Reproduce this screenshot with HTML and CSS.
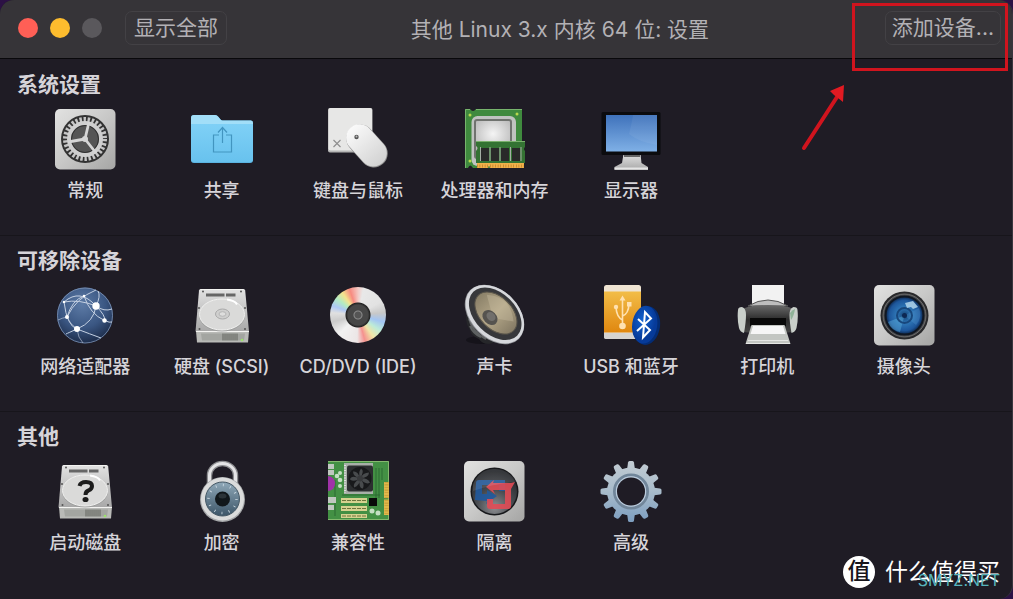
FILE: index.html
```html
<!DOCTYPE html>
<html lang="zh-CN">

<head>
    <meta charset="UTF-8">
    <meta name="viewport" content="width=device-width, initial-scale=1.0">
    <title>其他 Linux 3.x 内核 64 位: 设置</title>
    <link rel="stylesheet" href="styles.css">
</head>

<body>
    <!-- shared gradients and symbols -->
    <svg class="defs" width="0" height="0" aria-hidden="true">
        <defs>
            <linearGradient id="silver" x1="0" y1="0" x2="1" y2="1">
                <stop offset="0" stop-color="#e2e2e1" />
                <stop offset="0.5" stop-color="#c8c8c7" />
                <stop offset="1" stop-color="#a5a5a4" />
            </linearGradient>
            <linearGradient id="white" x1="0" y1="0" x2="0" y2="1">
                <stop offset="0" stop-color="#fafafa" />
                <stop offset="1" stop-color="#d2d2d2" />
            </linearGradient>
            <linearGradient id="metal" x1="0" y1="0" x2="0" y2="1">
                <stop offset="0" stop-color="#e2e2e2" />
                <stop offset="1" stop-color="#a8a8a8" />
            </linearGradient>
            <linearGradient id="folder" x1="0" y1="0" x2="0" y2="1">
                <stop offset="0" stop-color="#7fd0f6" />
                <stop offset="1" stop-color="#68c2ee" />
            </linearGradient>
            <linearGradient id="screen" x1="0" y1="0" x2="0" y2="1">
                <stop offset="0" stop-color="#3f72bb" />
                <stop offset="1" stop-color="#7fb0e6" />
            </linearGradient>
            <linearGradient id="orange" x1="0" y1="0" x2="0" y2="1">
                <stop offset="0" stop-color="#f2bd48" />
                <stop offset="1" stop-color="#e0870f" />
            </linearGradient>
            <linearGradient id="steel" x1="0" y1="0" x2="0" y2="1">
                <stop offset="0" stop-color="#c3ccd3" />
                <stop offset="0.5" stop-color="#a9bccb" />
                <stop offset="1" stop-color="#7c9dbf" />
            </linearGradient>
            <linearGradient id="dial" x1="0" y1="0" x2="0" y2="1">
                <stop offset="0" stop-color="#8fa8b8" />
                <stop offset="1" stop-color="#3c5568" />
            </linearGradient>
            <linearGradient id="cone" x1="0" y1="0" x2="1" y2="0">
                <stop offset="0" stop-color="#8a8068" />
                <stop offset="0.5" stop-color="#b3a688" />
                <stop offset="1" stop-color="#857b65" />
            </linearGradient>
            <linearGradient id="black" x1="0" y1="0" x2="0" y2="1">
                <stop offset="0" stop-color="#6a6a6a" />
                <stop offset="0.5" stop-color="#2c2c2c" />
                <stop offset="1" stop-color="#484848" />
            </linearGradient>
            <radialGradient id="globe" cx="0.45" cy="0.3" r="0.7">
                <stop offset="0" stop-color="#5d7ba6" />
                <stop offset="0.6" stop-color="#3a5682" />
                <stop offset="1" stop-color="#1d2d4b" />
            </radialGradient>
            <radialGradient id="lens">
                <stop offset="0" stop-color="#123e70" />
                <stop offset="0.4" stop-color="#2f78b8" />
                <stop offset="0.8" stop-color="#1d569b" />
                <stop offset="1" stop-color="#0c2447" />
            </radialGradient>
            <radialGradient id="bluetooth" cx="0.4" cy="0.4">
                <stop offset="0" stop-color="#1262d0" />
                <stop offset="1" stop-color="#063a99" />
            </radialGradient>
            <radialGradient id="die" cy="0.4" r="0.7">
                <stop offset="0" stop-color="#f4f4f4" />
                <stop offset="1" stop-color="#b5b5b5" />
            </radialGradient>
            <radialGradient id="glass" cy="0.85" r="0.8">
                <stop offset="0" stop-color="#8d8f92" />
                <stop offset="0.5" stop-color="#484b50" />
                <stop offset="1" stop-color="#202226" />
            </radialGradient>
            <symbol id="drive" viewBox="0 0 62 62">
                <path d="M5 47h53l-1 11.500H6z" fill="#b9bab7" />
                <path d="M10 49.500h44l-1 7H11z" fill="#a3a5a1" />
                <path d="M32 49.500v7M34 49.500v7M36 49.500v7M38 49.500v7M40 49.500v7M42 49.500v7M44 49.500v7M46 49.500v7" stroke="#62645f" />
                <circle cx="51" cy="56" r="1.300" fill="#9be36b" />
                <path d="M9.500 5h43q1.500 0 1.700 1.500L58 47.500H4.500L8 6.500Q8.200 5 9.500 5z" fill="url(#metal)" />
                <path d="M9.500 5.500h43M5 47.500h53" stroke="#f3f3f1" />
                <path d="M15 11h18.500M35 11h9.500" stroke="#666" stroke-width="3" />
                <ellipse cx="31" cy="31.500" rx="23" ry="16" fill="#9e9f9e" />
                <ellipse cx="31" cy="30.500" rx="22.500" ry="15.500" fill="#dadad9" stroke="#f1f1f0" />
                <path d="M36 15.500q8 1 10 5" stroke="#fff" stroke-width="2" fill="none" />
                <g fill="#555">
                    <circle cx="12" cy="7.500" r="1" />
                    <circle cx="50" cy="7.500" r="1" />
                    <circle cx="8" cy="24" r="1" />
                    <circle cx="54" cy="24" r="1" />
                    <circle cx="8.500" cy="45" r="1" />
                    <circle cx="54" cy="45" r="1" />
                </g>
            </symbol>
        </defs>
    </svg>

    <div class="window">
        <header class="titlebar">
            <div class="lights">
                <button class="light close" aria-label="关闭"></button>
                <button class="light minimize" aria-label="最小化"></button>
                <button class="light zoom" aria-label="缩放" disabled></button>
            </div>
            <button class="bar-button">显示全部</button>
            <h1>其他 Linux 3.x 内核 64 位: 设置</h1>
            <button class="bar-button add">添加设备...</button>
        </header>

        <main>
            <section>
                <h2>系统设置</h2>
                <div class="items">
                    <button class="item">
                        <svg class="icon" viewBox="0 0 62 62">
                            <rect x="1" y="1" width="60.500" height="60.500" rx="5" fill="url(#silver)" />
                            <circle cx="31" cy="31" r="24" fill="#323232" />
                            <circle cx="31" cy="31" r="19.500" fill="none" stroke="#c5c5c5" stroke-width="5" stroke-dasharray="2.400 1.684" />
                            <circle cx="31" cy="31" r="16" fill="#555" stroke="#cfcfcf" stroke-width="4" />
                            <circle cx="31" cy="31" r="13.500" fill="none" stroke="#303030" stroke-width="1" />
                            <path d="M31 31L35 14M31 31L14 34M31 31L42 45" stroke="#d5d5d5" stroke-width="2.800" />
                            <circle cx="31" cy="31" r="3" fill="#d5d5d5" />
                        </svg>
                        <span>常规</span>
                    </button>
                    <button class="item">
                        <svg class="icon" viewBox="0 0 62 62">
                            <path d="M0 10q0-3 3-3h21q2 0 3.500 2l2 2.500q.8 1 2 1H60q2 0 2 2.500v37q0 3-3 3H3q-3 0-3-3z" fill="#5bb4e2" />
                            <path d="M0 10q0-3 3-3h21q2 0 3.500 2l2 2.500q.8 1 2 1H60q2 0 2 2.500v3H0z" fill="#a2def8" />
                            <path d="M0 16h62v35q0 3-3 3H3q-3 0-3-3z" fill="url(#folder)" />
                            <path d="M28 27h-5.500v17h18V27H35M31.500 35V20M27 24.500l4.500-5 4.500 5" fill="none" stroke="#4295c0" stroke-width="1.200" />
                        </svg>
                        <span>共享</span>
                    </button>
                    <button class="item">
                        <svg class="icon" viewBox="0 0 62 62">
                            <rect x="1" y="0" width="44.500" height="44.500" rx="2" fill="#b5b5b5" />
                            <rect x="1.500" y="0" width="43.500" height="42.500" rx="2" fill="#e7e7e6" />
                            <path d="M6.500 32l7 7M13.500 32l-7 7" stroke="#8d8d8d" stroke-width="1.100" />
                            <rect x="26" y="14" width="28" height="48" rx="14" transform="rotate(-42 40 38)" fill="#8f8f8f" />
                            <rect x="26.500" y="13.500" width="27" height="47.500" rx="13.500" transform="rotate(-42 40 38)" fill="url(#white)" />
                            <circle cx="29.500" cy="29" r="2.200" fill="#555" />
                            <circle cx="29.500" cy="28.500" r="1" fill="#bbb" />
                        </svg>
                        <span>键盘与鼠标</span>
                    </button>
                    <button class="item">
                        <svg class="icon" viewBox="0 0 62 62">
                            <path d="M2 1h5q3 4 6 0h46v59H10q-3-5-5 0H2z" fill="#3f8a3e" />
                            <path d="M2.500 60V1.500H7M13 1.500h46" stroke="#77b46d" fill="none" />
                            <rect x="8.500" y="8" width="44.500" height="50" rx="6" fill="#c0c3c0" />
                            <rect x="11" y="11" width="38" height="40" rx="3" fill="#70736f" />
                            <rect x="13" y="13" width="34" height="32" rx="1" fill="url(#die)" />
                            <g fill="#b8d84d">
                                <circle cx="7" cy="7" r="1.500" />
                                <circle cx="54" cy="6" r="1.500" />
                                <circle cx="7" cy="53" r="1.500" />
                            </g>
                            <path d="M13 33h49v6q-2 2 0 4v12H13V43q3-3 0-5z" fill="#347333" />
                            <path d="M13 33.500h49" stroke="#7ab06c" />
                            <path d="M18 40h8v13h-8zM28 40h8v13h-8zM38 40h8v13h-8zM49 40h8v13h-8z" fill="#292929" />
                            <path d="M17.500 39v14M27 39v14M37 39v14M47.500 39v14M58 39v14" stroke="#a5afa5" />
                            <path d="M14 55h47v5H27l-1-3-1 3H14z" fill="#f0b04a" />
                            <path d="M14 58h47" stroke="#b57720" stroke-width="3" stroke-dasharray=".6 2" />
                        </svg>
                        <span>处理器和内存</span>
                    </button>
                    <button class="item">
                        <svg class="icon" viewBox="0 0 62 62">
                            <path d="M23.500 46h17l1 9 6.500 4v3H14.500v-3l7.500-4z" fill="url(#metal)" />
                            <path d="M24 48h16" stroke="#666" stroke-width="2" />
                            <path d="M14.500 60.500H48" stroke="#e5e5e5" stroke-width="2" />
                            <rect x="1.500" y="4" width="59" height="43" rx="1.500" fill="#0b0b0e" />
                            <rect x="6" y="7" width="51" height="36.500" fill="url(#screen)" />
                            <path d="M33 7h24v30q-18-3-28-11 3-12 4-19z" fill="#fff" opacity="0.060" />
                        </svg>
                        <span>显示器</span>
                    </button>
                </div>
            </section>

            <section>
                <h2>可移除设备</h2>
                <div class="items">
                    <button class="item">
                        <svg class="icon" viewBox="0 0 62 62">
                            <circle cx="31" cy="31.500" r="28" fill="url(#globe)" />
                            <circle cx="31" cy="31.500" r="27.500" fill="none" stroke="#7e93b5" stroke-width="0.800" />
                            <g fill="none" stroke="#c4d0e2" stroke-width="1">
                                <path d="M10 18Q26 4 42 22 50 28 58 25" />
                                <path d="M10 18Q25 15 42 22 40 38 23 45 13 42 10 18" />
                                <path d="M13 33Q18 16 30 12 36 30 50.500 36.500" />
                                <path d="M42 22Q52 32 50.500 36.500M23 45Q36 50 47 54" />
                                <path d="M13 33Q22 14 42 6M23 45Q14 49 12 50M42 22Q47 12 44 7M50.500 36.500Q56 39 58 38" />
                                <path d="M4 36Q8 34 13 33 16 40 23 45 24 54 29 59" opacity="0.600" />
                            </g>
                            <g fill="#fff">
                                <circle cx="42" cy="22" r="3.700" />
                                <circle cx="23" cy="45" r="3" />
                                <circle cx="13" cy="33" r="2" />
                                <circle cx="50.500" cy="36.500" r="2.200" />
                                <circle cx="10" cy="18" r="1.300" />
                                <circle cx="30" cy="12" r="1.300" />
                            </g>
                        </svg>
                        <span>网络适配器</span>
                    </button>
                    <button class="item">
                        <svg class="icon" viewBox="0 0 62 62">
                            <use href="#drive" width="62" height="62" />
                            <ellipse cx="31.500" cy="30" rx="7" ry="5" fill="#cfcfce" stroke="#aaa" />
                            <ellipse cx="31.500" cy="30" rx="3.500" ry="2.300" fill="#dededd" stroke="#b5b5b5" />
                        </svg>
                        <span>硬盘 (SCSI)</span>
                    </button>
                    <button class="item">
                        <i class="icon disc"></i>
                        <span>CD/DVD (IDE)</span>
                    </button>
                    <button class="item">
                        <svg class="icon" viewBox="0 0 62 62">
                            <ellipse cx="19" cy="56" rx="16" ry="4" fill="#15131a" />
                            <path d="M3 32l5-4 26 26q-1 5-8 6-7 0-10-5-8-3-9-9-4-5-4-14z" fill="#26272a" />
                            <path d="M7 42q3 8 11 11M6 35q4 14 17 20" stroke="#5d6061" stroke-width="2" fill="none" />
                            <g transform="rotate(45 31.500 30.500)">
                                <ellipse cx="31.500" cy="30.500" rx="34.500" ry="24" fill="#8e9095" />
                                <ellipse cx="31.500" cy="30" rx="34" ry="23.500" fill="#d6d8dc" />
                                <ellipse cx="31.500" cy="29.500" rx="31" ry="20.500" fill="#37383b" />
                                <ellipse cx="31.500" cy="28.500" rx="25" ry="16" fill="url(#cone)" stroke="#5b564b" />
                                <path d="M12 22q18-16 38 0L33 34z" fill="#cfc3a5" opacity="0.350" />
                            </g>
                            <ellipse cx="27" cy="33.500" rx="8.500" ry="6.500" transform="rotate(45 27 33.500)" fill="#55534f" />
                            <ellipse cx="28" cy="32.500" rx="5" ry="4" transform="rotate(45 28 32.500)" fill="#716f6c" />
                        </svg>
                        <span>声卡</span>
                    </button>
                    <button class="item">
                        <svg class="icon" viewBox="0 0 62 62">
                            <rect x="4" y="1" width="37" height="54" rx="2.500" fill="#efe4d3" />
                            <path d="M4 7.500h37v41H4z" fill="url(#orange)" />
                            <path d="M4 49h37v4q0 2-2.500 2h-32Q4 55 4 53z" fill="#d5d3d1" />
                            <g fill="none" stroke="#ffe1b0" stroke-width="1.600">
                                <path d="M22.500 41V15M22.500 36q-6-3-6.500-13M22.500 32q6-2 6.500-12" />
                            </g>
                            <g fill="#ffe1b0">
                                <path d="M22.500 11.500l3 5h-6z" />
                                <circle cx="16" cy="23" r="2.200" />
                                <path d="M27 18h4.500v4.500H27z" />
                                <circle cx="22.500" cy="42" r="3.300" />
                            </g>
                            <ellipse cx="46.500" cy="41.500" rx="13.500" ry="19.500" transform="rotate(8 46.500 41.500)" fill="#032c75" />
                            <ellipse cx="44.700" cy="40.700" rx="12.500" ry="19" transform="rotate(8 44.700 40.700)" fill="url(#bluetooth)" />
                            <path d="M38 35l12 11-7 7.500 2-25.500 6 6.500L37 47" fill="none" stroke="#fff" stroke-width="2" />
                        </svg>
                        <span>USB 和蓝牙</span>
                    </button>
                    <button class="item">
                        <svg class="icon" viewBox="0 0 62 62">
                            <path d="M16 1h32v23H16z" fill="#f2f2f2" />
                            <path d="M12 22q20-12 40 0z" fill="#bdbdbd" stroke="#555" />
                            <path d="M3 27q8-6 29-6t29 6q-1 14-5 21-24 4-48 0-4-7-5-21z" fill="url(#black)" />
                            <path d="M2 26q0-3 4-3 4 1 4 8t-2 18q-4-1-5-5-2-9-1-18zM61.500 26q0-3-4-3-4 1-4 8t2 18q4-1 5-5 2-9 1-18z" fill="#c9cfca" />
                            <path d="M54 29q2-3 5-4-1 7-4 11z" fill="#8fb298" />
                            <path d="M14 34h36v8H14z" fill="#090909" />
                            <path d="M15.500 41h33l6 19H9.500z" fill="#c3c6c2" />
                            <path d="M17 42h30l2.500 8h-35z" fill="#f6f6f6" />
                            <path d="M12 56.500h40M10 59.500h44" stroke="#e6e7e5" stroke-width="1.200" />
                        </svg>
                        <span>打印机</span>
                    </button>
                    <button class="item">
                        <svg class="icon" viewBox="0 0 62 62">
                            <rect x="1" y="1" width="60.500" height="60.500" rx="5" fill="url(#silver)" />
                            <circle cx="31.500" cy="31.500" r="24" fill="#29292b" />
                            <circle cx="31.500" cy="31.500" r="21.500" fill="#48494b" stroke="#787878" stroke-width="0.800" />
                            <circle cx="31.500" cy="31.500" r="19" fill="url(#lens)" stroke="#101722" stroke-width="2" />
                            <path d="M31.500 31.500L15 38q3 8 12 10z" fill="#5fb2de" opacity="0.450" />
                            <path d="M31.500 31.500L46 24q4 8-3 17z" fill="#62a9dc" opacity="0.250" />
                            <circle cx="31.500" cy="31.500" r="7.500" fill="none" stroke="#18477c" stroke-width="2" />
                            <circle cx="31.500" cy="31.500" r="2.500" fill="#0d2853" />
                            <path d="M32 19l8-2 5 6-5 2-2-2-4 1z" fill="#bbddf0" opacity="0.800" />
                        </svg>
                        <span>摄像头</span>
                    </button>
                </div>
            </section>

            <section>
                <h2>其他</h2>
                <div class="items">
                    <button class="item">
                        <svg class="icon" viewBox="0 0 62 62">
                            <use href="#drive" width="62" height="62" />
                            <path d="M25.500 26q1-4 6.500-4 6 0 6 4 0 3-3.500 4.500-3 1-3 4.500" fill="none" stroke="#1c1c1c" stroke-width="4" />
                            <ellipse cx="31.500" cy="39.500" rx="3" ry="2.600" fill="#1c1c1c" />
                        </svg>
                        <span>启动磁盘</span>
                    </button>
                    <button class="item">
                        <svg class="icon" viewBox="0 0 62 62">
                            <path d="M18.500 26V15.500a13 12 0 0 1 26 0V26" fill="none" stroke="#8c8d90" stroke-width="5.500" />
                            <path d="M18.500 26V15.500a13 12 0 0 1 26 0V26" fill="none" stroke="#e4e4e6" stroke-width="3" />
                            <circle cx="31.500" cy="39.500" r="22.500" fill="#a5a7a9" />
                            <circle cx="31.500" cy="39" r="21.500" fill="#dbdcdc" />
                            <circle cx="31.500" cy="39" r="17" fill="url(#dial)" stroke="#465966" />
                            <circle cx="31.500" cy="39" r="14" fill="none" stroke="#d5e1e8" stroke-width="2.500" stroke-dasharray=".8 6.530" />
                            <circle cx="31.500" cy="39" r="7.500" fill="#11171b" />
                            <ellipse cx="31.500" cy="36" rx="4" ry="2.500" fill="#2b3338" />
                        </svg>
                        <span>加密</span>
                    </button>
                    <button class="item">
                        <svg class="icon" viewBox="0 0 62 62">
                            <path d="M1 1h61v59H1z" fill="#439044" />
                            <path d="M1 1.500h60.500v58H1" fill="none" stroke="#84b96e" />
                            <path d="M49 8v30M52 8v30M55 8v12M15 35h38M8 20v36" stroke="#2d6b32" />
                            <path d="M1 4h6v5H1zM1 10h6v5H1zM1 37h8v6H1zM1 45h6v5H1z" fill="#c0c7c0" />
                            <path d="M1 16q7 1 7 7.500T1 31z" fill="#a032a8" />
                            <path d="M17 3h29v31H17z" fill="#a8afa8" />
                            <path d="M18 5v28" stroke="#dee1de" stroke-width="2" stroke-dasharray="1 1.500" />
                            <rect x="20" y="5.500" width="26" height="26" rx="2" fill="#2c2e30" />
                            <circle cx="33" cy="18.500" r="11.500" fill="#18191b" />
                            <path d="M33 18.500q-2-6 1-10 4 2-1 10M33 18.500q3-6 9-6 0 5-9 6M33 18.500q7-1 10 4-4 3-10-4M33 18.500q5 5 3 10-5 0-3-10M33 18.500q0 7-6 9-2-4 6-9M33 18.500q-6 4-10 1 1-5 10-1M33 18.500q-7-2-7-7 5-1 7 7" fill="#484b4d" />
                            <circle cx="33" cy="18.500" r="3" fill="#383a3c" />
                            <g fill="#c5dfc3">
                                <circle cx="10" cy="16" r="2.300" />
                                <circle cx="13" cy="13" r="2" />
                                <circle cx="13" cy="20" r="2.300" />
                                <circle cx="13" cy="26" r="2" />
                                <circle cx="45" cy="51" r="2.500" />
                                <circle cx="51" cy="53" r="2.500" />
                            </g>
                            <path d="M14 38h26v5H14zM14 46h26v5H14zM14 54h26v4H14z" fill="#d5d28f" />
                            <path d="M15 40.500h25M15 48.500h25M15 56h25" stroke="#6d753c" stroke-width="1" stroke-dasharray="4 1" />
                            <path d="M42 38h8v8h-8z" fill="#080a08" />
                            <path d="M57 22h5v16h-5zM57 39.500h5V55h-5z" fill="#e1b74b" />
                            <path d="M59.500 22v33" stroke="#b8912f" stroke-width="4" stroke-dasharray=".6 2" />
                        </svg>
                        <span>兼容性</span>
                    </button>
                    <button class="item">
                        <svg class="icon" viewBox="0 0 62 62">
                            <rect x="1" y="1" width="60.500" height="60.500" rx="5" fill="url(#silver)" />
                            <circle cx="31.500" cy="31.500" r="24" fill="#17181b" />
                            <circle cx="31.500" cy="31.500" r="22.500" fill="url(#glass)" />
                            <path d="M12 40l12 1-1 3 11-8-10-6v4h-5V25h17v6h6V20H16q-3 0-3 3z" fill="#20599d" opacity="0.900" />
                            <path d="M30 23h18l4-1-4 7v17q0 3-3 3H27q-3 0-3-3v-7h6v5h12V30H30l2 4-9-7 8-7z" fill="#e14b55" opacity="0.900" />
                            <path d="M10 24q7-16 22-15 14 0 21 13-20 1-43 9z" fill="#fff" opacity="0.100" />
                        </svg>
                        <span>隔离</span>
                    </button>
                    <button class="item">
                        <svg class="icon" viewBox="0 0 62 62">
                            <mask id="hole">
                                <rect width="62" height="62" fill="#fff" />
                                <circle cx="31" cy="31.500" r="14" fill="#000" />
                            </mask>
                            <mask id="teeth">
                                <g fill="#fff">
                                    <circle cx="31" cy="31.500" r="24" />
                                    <path id="tooth" d="M27 10l1-7.500q.3-1.500 1.500-1.500h3q1.200 0 1.500 1.500L35 10v43l-1 7.500q-.3 1.500-1.500 1.500h-3q-1.200 0-1.500-1.500L27 53z" />
                                    <use href="#tooth" transform="rotate(30 31 31.500)" />
                                    <use href="#tooth" transform="rotate(60 31 31.500)" />
                                    <use href="#tooth" transform="rotate(90 31 31.500)" />
                                    <use href="#tooth" transform="rotate(120 31 31.500)" />
                                    <use href="#tooth" transform="rotate(150 31 31.500)" />
                                </g>
                            </mask>
                            <g mask="url(#hole)">
                                <rect width="62" height="62" fill="url(#steel)" mask="url(#teeth)" />
                                <circle cx="31" cy="31.500" r="16.500" fill="none" stroke="#71869a" stroke-width="3" />
                                <circle cx="31" cy="31.500" r="14.500" fill="none" stroke="#bacbdc" stroke-width="1.500" />
                            </g>
                        </svg>
                        <span>高级</span>
                    </button>
                </div>
            </section>
        </main>

        <!-- marks the add device button -->
        <svg class="callout" viewBox="0 0 210 152" aria-hidden="true">
            <rect x="52.500" y="4.500" width="153" height="65" fill="none" stroke="#d0141e" stroke-width="3" />
            <path d="M3 148L36 97" stroke="#d0141e" stroke-width="4" stroke-linecap="round" />
            <path d="M43 85l-1 17-5-4-4-3-4-4z" fill="#e21a22" />
        </svg>

        <div class="watermark">
            <span class="badge">值</span>
            <span class="brand">什么值得买</span>
            <span class="site">SMYZ.NET</span>
        </div>
    </div>
</body>

</html>
```

FILE: styles.css
```css
* {
    box-sizing: border-box;
}

body {
    margin: 0;
    background-color: #2c1145;
    font-family: Inter, "Noto Sans CJK SC", sans-serif;
}

button {
    margin: 0;
    padding: 0;
    border: none;
    background: none;
    color: inherit;
    font: inherit;
    cursor: pointer;
}

h1,
h2 {
    margin: 0;
}

.defs {
    position: absolute;
}

.window {
    position: relative;
    min-height: 100vh;
    overflow: hidden;
    background-color: #1f1c25;
    border-right: 1px solid #39363e;
    border-radius: 14px 14px 14px 0;
    color: #d6d4d9;
}

.titlebar {
    display: flex;
    align-items: center;
    height: 59px;
    padding: 0 11px 2px 18px;
    background-color: #363438;
    border-bottom: 1px solid #09080b;
    color: #b3b1b5;
}

.lights {
    display: flex;
    gap: 12px;
    margin-right: 23px;
}

.light {
    width: 20px;
    height: 20px;
    border-radius: 50%;
}

.close {
    background-color: #ff5f56;
}

.minimize {
    background-color: #fdbc2e;
}

.zoom {
    background-color: #5a585c;
}

.bar-button {
    height: 34px;
    padding: 0 8px;
    border: 1px solid #434145;
    border-radius: 7px;
    font-size: 21px;
    line-height: 32px;
}

.add {
    padding: 0 6px;
}

.titlebar h1 {
    flex: 1;
    padding-left: 8px;
    font-size: 21px;
    font-weight: 400;
    text-align: center;
}

section {
    height: 176px;
    padding: 13px 40px 0 17px;
}

section + section {
    border-top: 1px solid #17151b;
    padding-top: 12px;
}

h2 {
    font-size: 21px;
    font-weight: 700;
    line-height: 26px;
}

.items {
    display: grid;
    grid-template-columns: repeat(7, 1fr);
    padding-top: 10px;
}

.item {
    display: flex;
    flex-direction: column;
    align-items: center;
    gap: 9px;
    font-size: 18px;
    font-weight: 500;
    line-height: 24px;
    white-space: nowrap;
}

.icon {
    display: block;
    width: 62px;
    height: 62px;
}

.disc {
    border: 3px solid transparent;
    border-radius: 50%;
    background: radial-gradient(circle, #555 0 3px, #8b8b8b 4px, #474747 5px 10px, #222 12px, transparent 13px) padding-box,
        conic-gradient(#f3c9c4 0deg, #e8e8e8 12deg, #e2e2e2 60deg, #c8c8c8 85deg, #a3c5f3 105deg, #bdebd8 125deg, #f0e6a8 145deg, #f5918e 165deg, #ece6e6 182deg, #f2f2f2 225deg, #cbcbcb 255deg, #e0e0e0 275deg, #aec8f5 290deg, #b3ecc2 308deg, #f5e38d 325deg, #f78a80 342deg, #f3c9c4 360deg) padding-box;
}

.callout {
    position: absolute;
    top: 0;
    right: 1px;
    width: 210px;
    height: 152px;
    pointer-events: none;
}

.watermark {
    position: absolute;
    right: 12px;
    bottom: 10px;
    display: flex;
    align-items: center;
    gap: 10px;
    color: #fff;
    font-size: 23px;
    line-height: 34px;
}

.badge {
    width: 32px;
    height: 32px;
    border-radius: 50%;
    background-color: #fff;
    color: #17151b;
    font-weight: 500;
    line-height: 30px;
    text-align: center;
}

.site {
    position: absolute;
    right: 0;
    bottom: -8px;
    color: #58b5bd;
    font-size: 16px;
}
```
